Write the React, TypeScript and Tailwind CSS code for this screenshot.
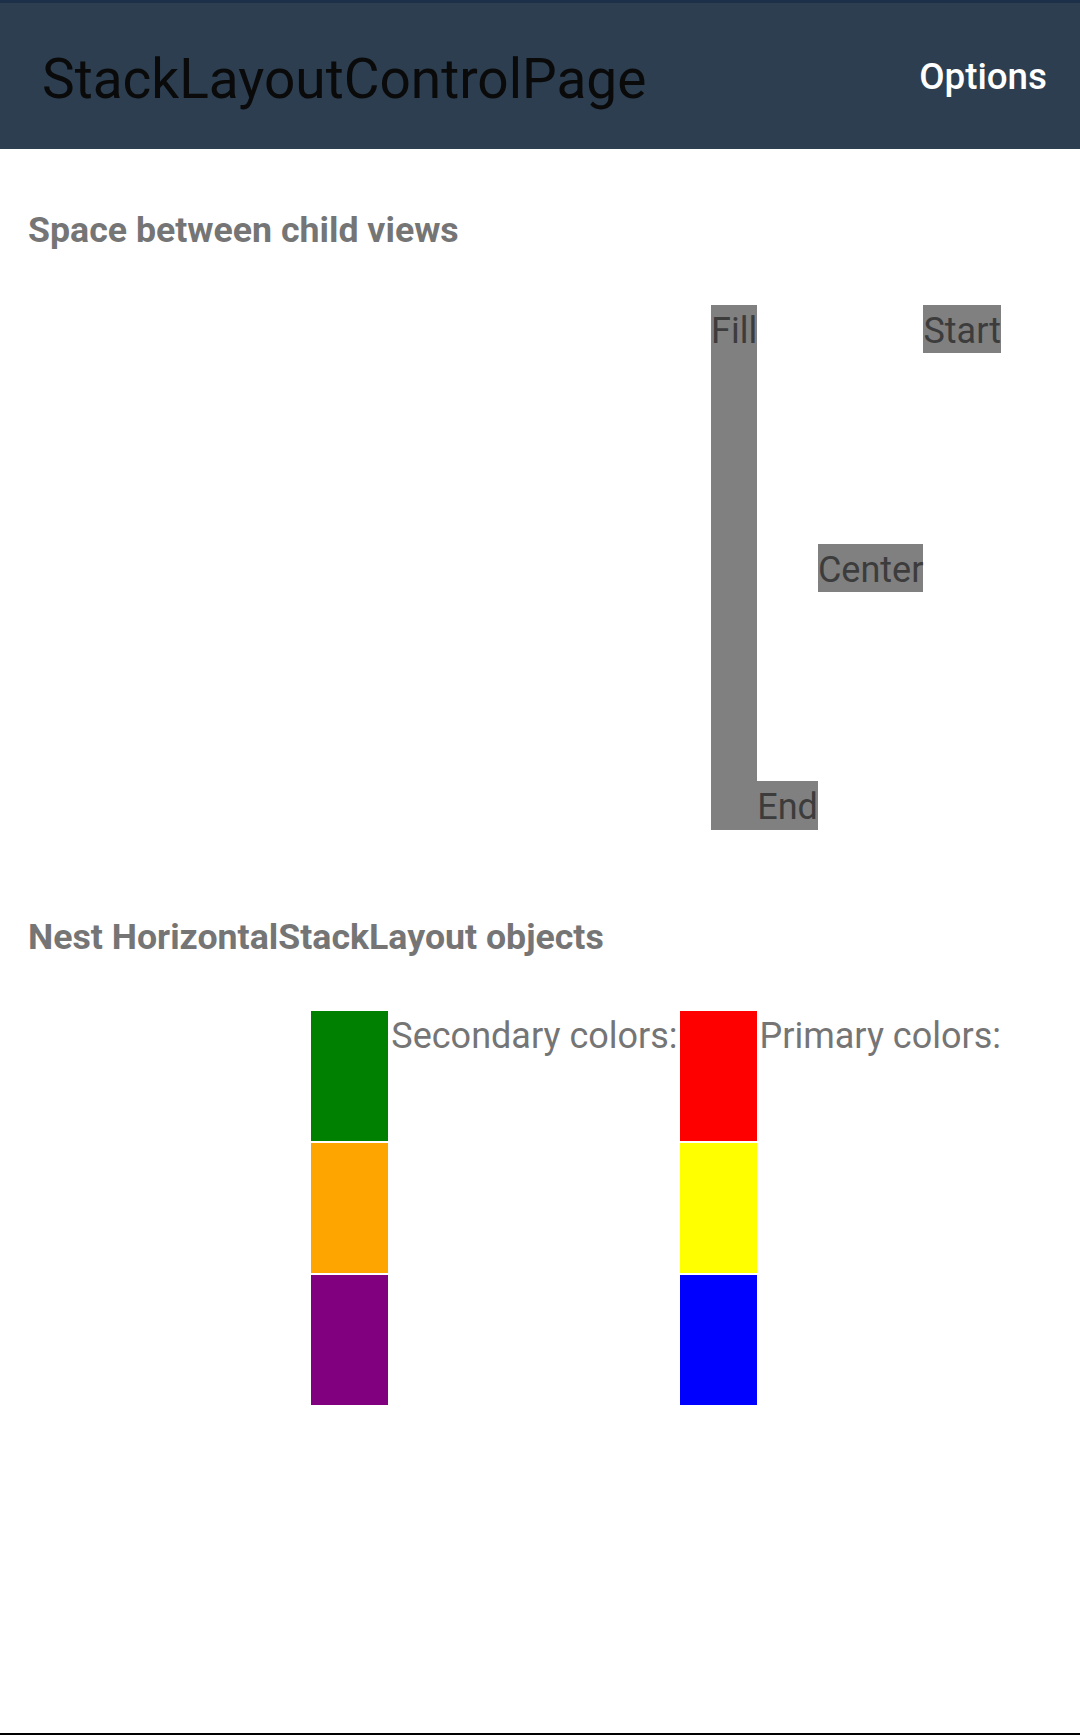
const font = { fontFamily: "Roboto, 'Noto Sans', sans-serif" };

const ColorColumn = ({ colors }: { colors: string[] }) => (
  <div className="flex flex-col gap-[2px]">
    {colors.map((c) => (
      <div key={c} className={`w-[77px] h-[130px] ${c}`} />
    ))}
  </div>
);

const App = () => {
  return (
    <div className="w-[1080px] h-[1735px] bg-white flex flex-col" style={font}>
      <div className="h-[3px] bg-[#1c3049]" />
      <header className="h-[146px] bg-[#2c3e50] flex items-center justify-between pl-[42px] pr-[33px]">
        <h1 className="mt-[6px] text-[55px] leading-none text-[#0a0a0a]">StackLayoutControlPage</h1>
        <button className="mt-[2px] text-[36.75px] font-medium leading-none text-white">Options</button>
      </header>

      <main className="flex-1 flex flex-col px-[28px] pr-[79px]">
        <h2 className="mt-[60px] text-[35.7px] leading-[43px] font-bold text-[#757575]">
          Space between child views
        </h2>

        {/* horizontal stack, flows right to left */}
        <div className="mt-[53px] h-[525px] flex flex-row-reverse text-[36px] text-[#3c3c3c]">
          <div className="self-start h-[48px] pt-[4px] leading-[44px] bg-[#808080]">Start</div>
          <div className="self-center h-[48px] pt-[4px] leading-[44px] bg-[#808080]">Center</div>
          <div className="self-end h-[49px] pt-[4px] leading-[44px] bg-[#808080]">End</div>
          <div className="self-stretch pt-[4px] leading-[44px] bg-[#808080]">Fill</div>
        </div>

        <h2 className="mt-[86px] text-[35.7px] leading-[43px] font-bold text-[#757575]">
          Nest HorizontalStackLayout objects
        </h2>

        <div className="mt-[52px] flex flex-row-reverse items-start text-[36px] leading-[50px] text-[#757575]">
          <span className="ml-[3px]">Primary colors:</span>
          <ColorColumn colors={["bg-[#ff0000]", "bg-[#ffff00]", "bg-[#0000ff]"]} />
          <span className="ml-[3px] mr-[2px]">Secondary colors:</span>
          <ColorColumn colors={["bg-[#008000]", "bg-[#ffa500]", "bg-[#800080]"]} />
        </div>
      </main>

      <div className="h-[2px] bg-black" />
    </div>
  );
};

export default App;
